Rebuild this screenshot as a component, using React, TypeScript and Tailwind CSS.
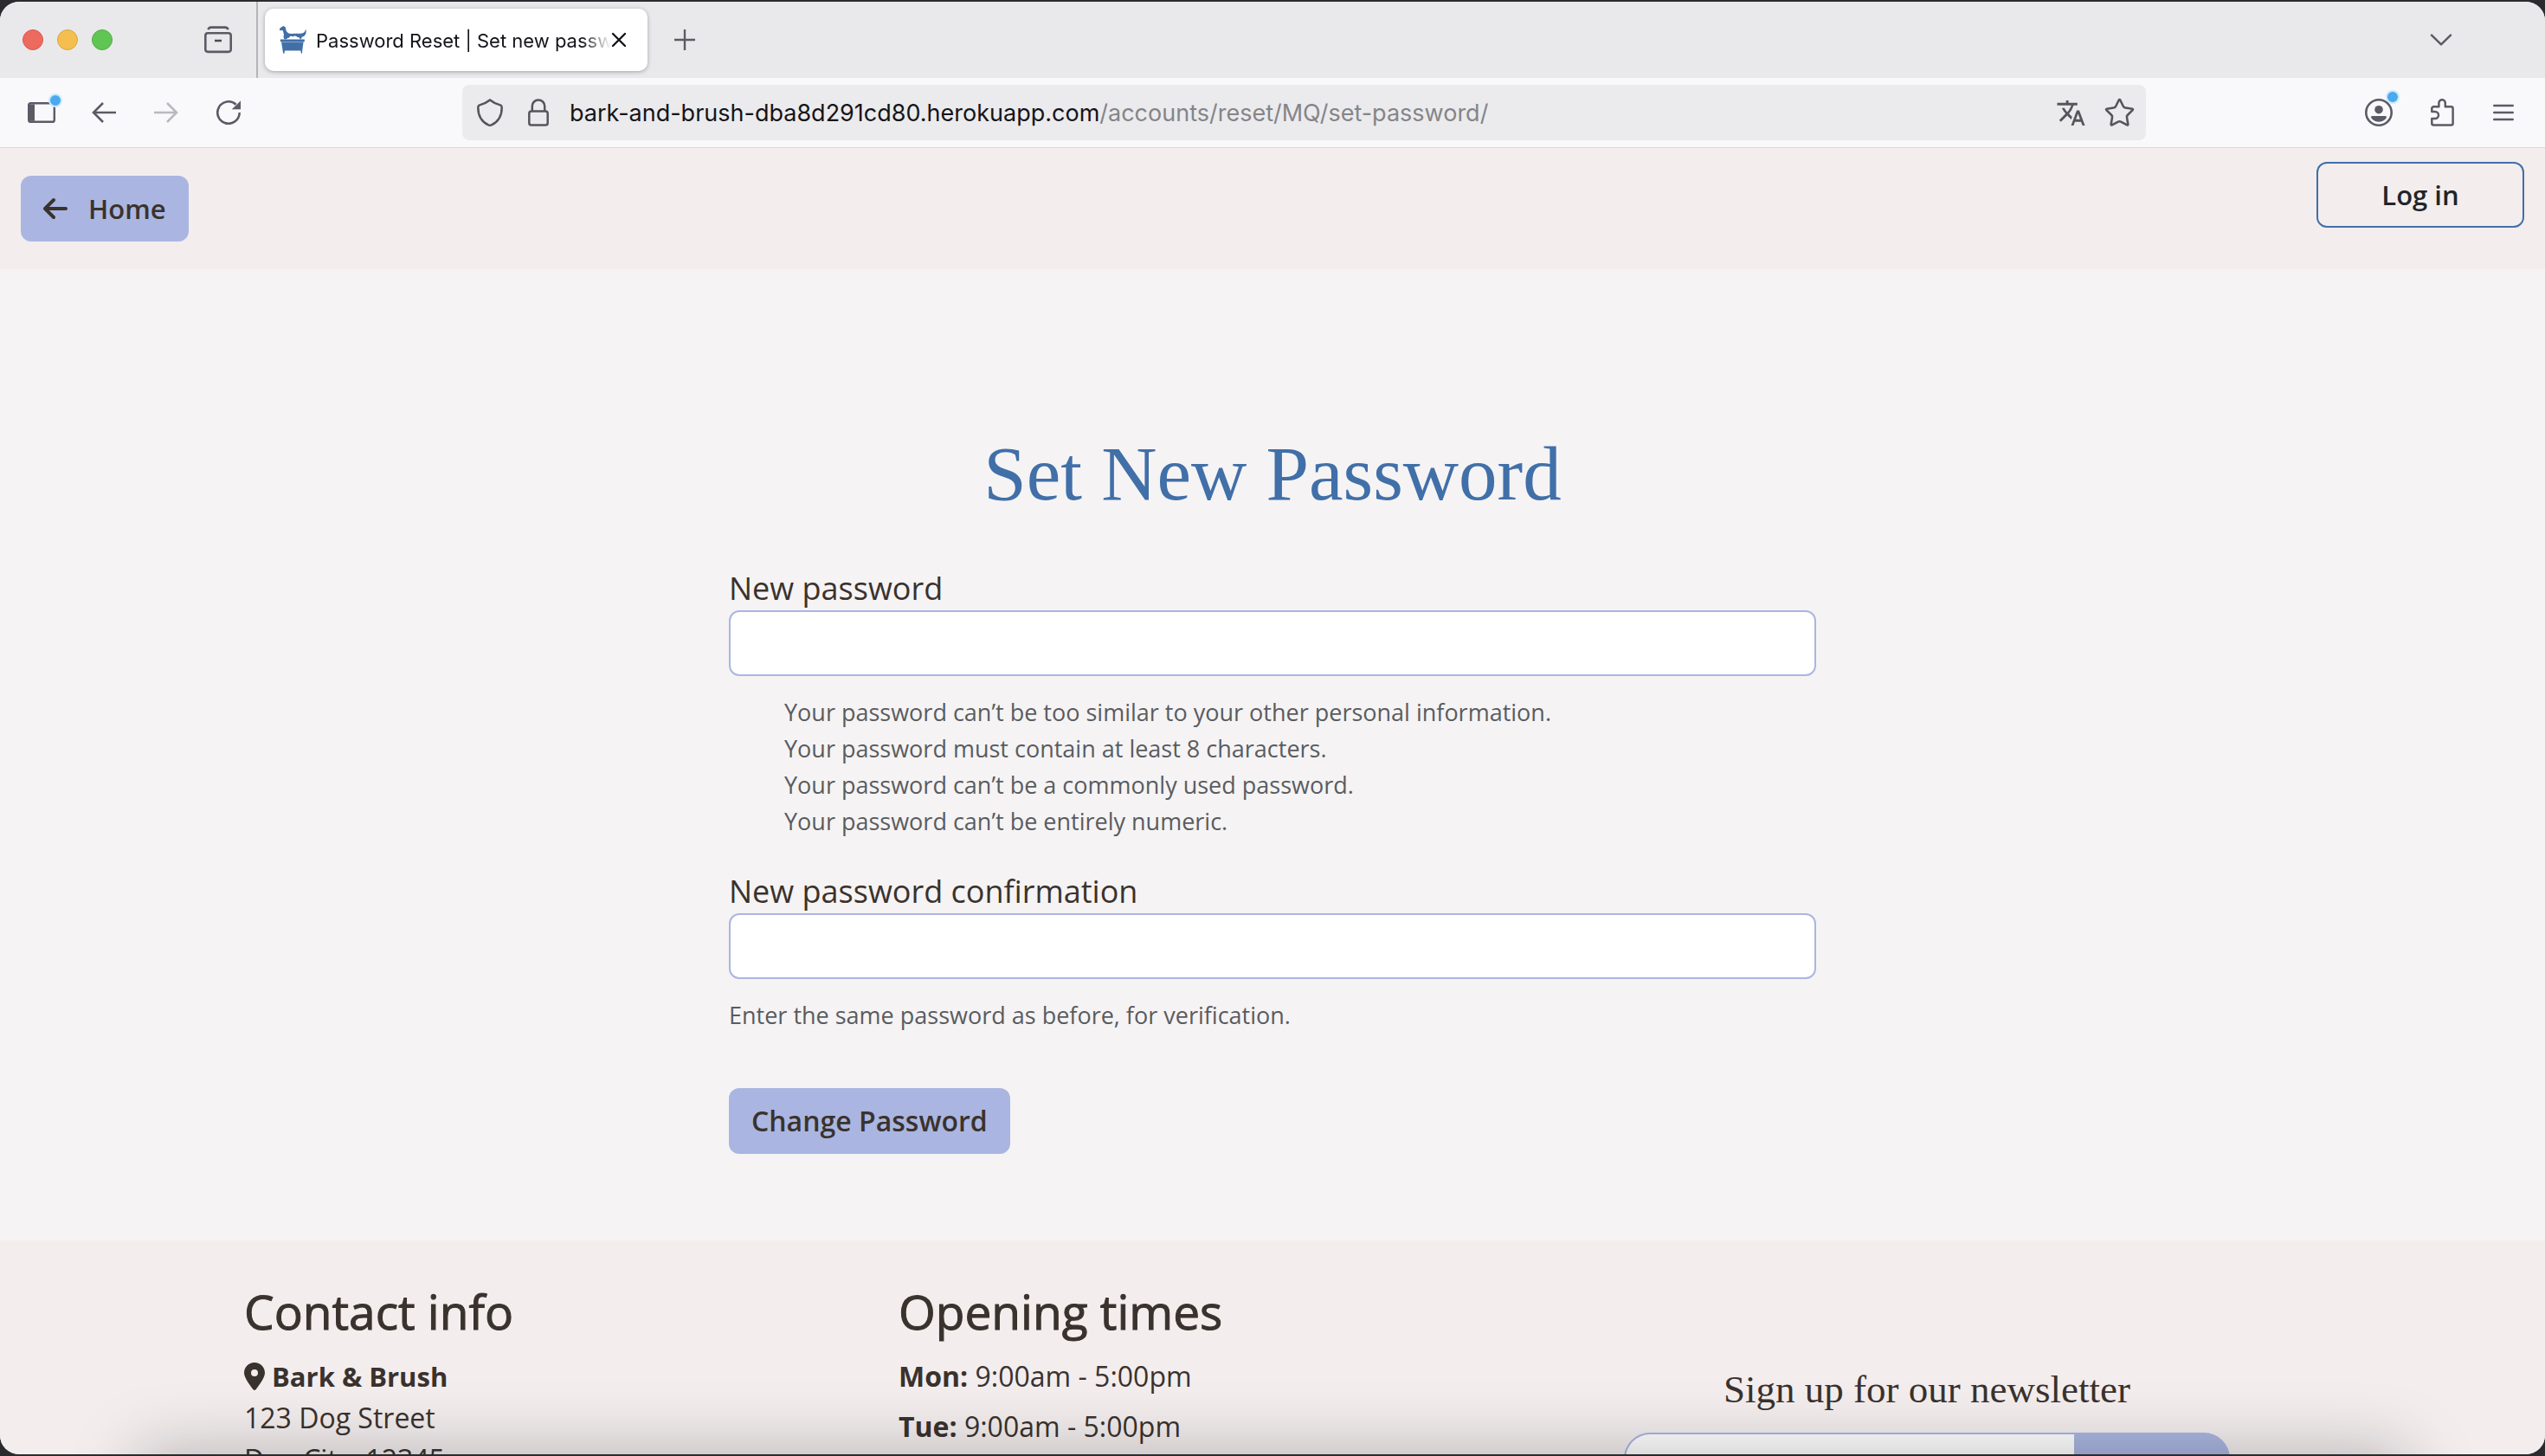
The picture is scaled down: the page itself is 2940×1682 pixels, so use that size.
import React from "react";
import { FaArrowLeft, FaLocationDot } from "react-icons/fa6";
import { MdTranslate } from "react-icons/md";
import { Star } from "lucide-react";

const passwordRules = [
  "Your password can’t be too similar to your other personal information.",
  "Your password must contain at least 8 characters.",
  "Your password can’t be a commonly used password.",
  "Your password can’t be entirely numeric.",
];

const openingTimes = [
  { day: "Mon", hours: "9:00am - 5:00pm" },
  { day: "Tue", hours: "9:00am - 5:00pm" },
];

function Favicon() {
  return (
    <svg width="32" height="32" viewBox="0 0 32 32" className="shrink-0" aria-hidden="true">
      <path
        d="M.8 3.6 3 1.2 5.6 0 7.8 1.6 8.6 5.4C10 8.4 13 9.4 17 8.8L24 8.8C28 8.8 30.4 7.4 31.2 3.4 32.6 8.4 30.6 11 28 12.4L29 15.2H4L6 10.4 4.8 5.2 1.2 5Z"
        fill="#416fa8"
      />
      <path d="M9 16C9 13.8 11 13.6 12 13.8 12.6 11.6 15.4 11.4 16.4 12.6 18 10.6 21 11.4 21.6 13.2 23.6 12.6 25 14.4 24.6 16ZM25.6 16 26.8 12.6 32 13V16ZM0 16V11H5.2L6.4 16Z" fill="#fff" />
      <path d="M1.8 15.6H29.8V18.2H28.6L27.2 28.6 27 31.8H26L25.2 28.6H7L6.4 31.8H5.2L4.6 28.6 3 18.2H1.8Z" fill="#416fa8" />
      <path d="M3.2 18.6H28.4" stroke="#a9bfdb" strokeWidth=".7" />
    </svg>
  );
}

function ArchiveIcon() {
  return (
    <svg width="32" height="32" viewBox="0 0 32 32" fill="none" stroke="#5b5b66" strokeWidth="2.6" aria-hidden="true">
      <path d="M4.6 4.2C5 2.4 6 1.6 7.6 1.6H24.4C26 1.6 27 2.4 27.4 4.2" />
      <rect x="1.3" y="8.3" width="29.4" height="21.6" rx="2.8" />
      <path d="M12 17H20" stroke="#4a4a54" />
    </svg>
  );
}

function SidebarIcon() {
  return (
    <svg width="32" height="24" viewBox="0 0 32 24" aria-hidden="true">
      <rect x="1.2" y="1.2" width="29.6" height="21.6" rx="2.4" fill="none" stroke="#5b5b66" strokeWidth="2.4" />
      <path d="M1.2 2.4H8V21.8H1.2Z" fill="#5b5b66" />
    </svg>
  );
}

function BackIcon() {
  return (
    <svg width="28" height="24" viewBox="0 0 28 24" fill="none" stroke="#5b5b66" strokeWidth="2.6" aria-hidden="true">
      <path d="M28 12H2M13 1 2 12 13 23" />
    </svg>
  );
}

function ForwardIcon() {
  return (
    <svg width="28" height="24" viewBox="0 0 28 24" fill="none" stroke="#b9b9bf" strokeWidth="2.6" aria-hidden="true">
      <path d="M0 12H26M15 1 26 12 15 23" />
    </svg>
  );
}

function ReloadIcon() {
  return (
    <svg width="28" height="28" viewBox="0 0 28 28" aria-hidden="true">
      <path d="M26.7 14A12.7 12.7 0 1 1 22.6 4.7" fill="none" stroke="#5b5b66" strokeWidth="2.6" />
      <path d="M28 .8V10H18.4Z" fill="#5b5b66" stroke="#5b5b66" strokeWidth=".6" strokeLinejoin="round" />
    </svg>
  );
}

function ShieldIcon() {
  return (
    <svg width="30" height="32" viewBox="0 0 30 32" fill="none" stroke="#55555c" strokeWidth="2.5" strokeLinejoin="round" aria-hidden="true">
      <path d="M15 1.4C12 3.8 7.4 6.2 3.2 7.4 1.6 7.9 1.3 8.8 1.3 10.4 1.3 19.6 5.6 26.6 13.2 30.4Q15 31.2 16.8 30.4C24.4 26.6 28.7 19.6 28.7 10.4 28.7 8.8 28.4 7.9 26.8 7.4 22.6 6.2 18 3.8 15 1.4Z" />
    </svg>
  );
}

function LockIcon() {
  return (
    <svg width="24" height="32" viewBox="0 0 24 32" fill="none" stroke="#55555c" strokeWidth="2.5" aria-hidden="true">
      <rect x="1.3" y="14.6" width="21.4" height="16" rx="2.6" />
      <path d="M4.8 14.6V8.6A7.2 7.2 0 0 1 19.2 8.6V14.6" />
    </svg>
  );
}

function AccountIcon() {
  return (
    <svg width="32" height="32" viewBox="0 0 32 32" fill="#5b5b66" aria-hidden="true">
      <circle cx="16" cy="16" r="14.7" fill="none" stroke="#5b5b66" strokeWidth="2.6" />
      <circle cx="16" cy="12.7" r="4.8" />
      <path d="M8.6 20H23.4C25.2 20 25.4 21.6 24.4 22.8 20.2 28.2 11.8 28.2 7.6 22.8 6.6 21.6 6.8 20 8.6 20Z" />
    </svg>
  );
}

function PuzzleIcon() {
  return (
    <svg width="27" height="32" viewBox="0 0 27 32" fill="none" stroke="#5b5b66" strokeWidth="2.5" strokeLinejoin="round" aria-hidden="true">
      <path d="M1.3 15V11.2A2 2 0 0 1 3.3 9.2H9.4V5A3.7 3.7 0 0 1 16.8 5V9.2H23.6A2 2 0 0 1 25.6 11.2V28.6A2 2 0 0 1 23.6 30.6H3.3A2 2 0 0 1 1.3 28.6V23H5A4 4 0 0 0 5 15Z" />
    </svg>
  );
}

function MenuIcon() {
  return (
    <svg width="24" height="20" viewBox="0 0 24 20" stroke="#5b5b66" strokeWidth="2.4" strokeLinecap="round" aria-hidden="true">
      <path d="M1.2 2H22.8M1.2 10H22.8M1.2 18H22.8" />
    </svg>
  );
}

function NotificationDot() {
  return <span className="absolute -right-2 -top-[10px] size-4 rounded-full border-2 border-[#c8ebfb] bg-[#4aa9ef]" />;
}

function TabBar() {
  return (
    <div className="flex h-[88px] items-center bg-[#e9e9eb]">
      <div className="ml-[26px] flex gap-4">
        <span className="size-6 rounded-full border border-[#d85a50] bg-[#ed6a5e]" />
        <span className="size-6 rounded-full border border-[#dba63c] bg-[#f5bf4f]" />
        <span className="size-6 rounded-full border border-[#4fae42] bg-[#61c554]" />
      </div>
      <button type="button" aria-label="Firefox View" className="ml-[106px]">
        <ArchiveIcon />
      </button>
      <div className="ml-7 h-full w-[2px] bg-[#b4b4b8]" />
      <div className="ml-2 flex h-[72px] w-[442px] items-center rounded-[10px] bg-white pl-4 pr-6 shadow-[0_1px_5px_rgba(0,0,0,0.3)]">
        <Favicon />
        <span className="ml-[11px] flex-1 overflow-hidden whitespace-nowrap pt-[2px] [mask-image:linear-gradient(to_right,black_90%,transparent)] text-[22px] leading-8 text-[#15141a]">
          Password Reset | Set new password
        </span>
        <button type="button" aria-label="Close tab" className="shrink-0">
          <svg width="18" height="18" viewBox="0 0 18 18" stroke="#15141a" strokeWidth="2.4" strokeLinecap="round" aria-hidden="true">
            <path d="M2 2 16 16M16 2 2 16" />
          </svg>
        </button>
      </div>
      <button type="button" aria-label="New tab" className="ml-[31px]">
        <svg width="24" height="24" viewBox="0 0 24 24" stroke="#5b5b66" strokeWidth="2.4" aria-hidden="true">
          <path d="M12 0V24M0 12H24" />
        </svg>
      </button>
      <button type="button" aria-label="List all tabs" className="ml-auto mr-[107px]">
        <svg width="26" height="14" viewBox="0 0 26 14" fill="none" stroke="#5b5b66" strokeWidth="2.5" strokeLinecap="round" strokeLinejoin="round" aria-hidden="true">
          <path d="M2 1.6 13 12.4 24 1.6" />
        </svg>
      </button>
    </div>
  );
}

function Toolbar() {
  return (
    <div className="flex h-[81px] items-center border-b border-[#d9d7da] bg-[#f9f9fb] px-8">
      <button type="button" aria-label="Sidebar" className="relative">
        <SidebarIcon />
        <NotificationDot />
      </button>
      <button type="button" aria-label="Back" className="ml-[42px]">
        <BackIcon />
      </button>
      <button type="button" aria-label="Forward" className="ml-11">
        <ForwardIcon />
      </button>
      <button type="button" aria-label="Reload" className="ml-11">
        <ReloadIcon />
      </button>
      <div className="ml-64 mr-[253px] flex h-16 flex-1 items-center rounded-lg bg-[#ebebed] pl-[17px] pr-3">
        <ShieldIcon />
        <span className="ml-[29px]">
          <LockIcon />
        </span>
        <span className="ml-6 flex-1 whitespace-nowrap pt-[2px] text-[27px] leading-10 text-[#15141a]">
          bark-and-brush-dba8d291cd80.herokuapp.com
          <span className="text-[#858588]">/accounts/reset/MQ/set-password/</span>
        </span>
        <button type="button" aria-label="Translate page">
          <MdTranslate className="size-[35px] text-[#55555c]" />
        </button>
        <button type="button" aria-label="Bookmark" className="ml-5">
          <Star className="size-[37px] text-[#55555c]" strokeWidth={1.7} />
        </button>
      </div>
      <button type="button" aria-label="Account" className="relative">
        <AccountIcon />
        <NotificationDot />
      </button>
      <button type="button" aria-label="Extensions" className="ml-11">
        <PuzzleIcon />
      </button>
      <button type="button" aria-label="Menu" className="ml-[45px] mr-1">
        <MenuIcon />
      </button>
    </div>
  );
}

function SiteHeader() {
  return (
    <header className="flex items-start justify-between bg-[#f3edee] px-6 pb-8 pt-4">
      <a href="#home" className="mt-4 flex h-[76px] items-center rounded-xl bg-[#aab6e1] px-[26px] text-[31px] font-semibold text-[#3a322d]">
        <FaArrowLeft className="mr-6 h-8 w-7" />
        Home
      </a>
      <a href="#login" className="flex h-[76px] w-60 items-center justify-center rounded-xl border-2 border-[#416fa8] text-[31px] font-semibold text-[#212529]">
        Log in
      </a>
    </header>
  );
}

function PasswordForm() {
  return (
    <main className="bg-[#f5f3f4] px-6 pb-[100px] pt-[183px]">
      <form className="mx-auto flex max-w-[1256px] flex-col" onSubmit={(e) => e.preventDefault()}>
        <h1 className="mb-[51px] text-center font-['Liberation_Serif',serif] text-[89px] leading-[106px] text-[#416fa8]">
          Set New Password
        </h1>
        <label htmlFor="password1" className="pt-1 text-4xl leading-[50px]">
          New password
        </label>
        <input id="password1" type="password" className="h-[76px] rounded-xl border-2 border-[#aab6e1] bg-white px-6 text-[31px] outline-none" />
        <ul className="mb-[31px] mt-[21px] pl-16 text-[27px] leading-[42px] text-[#595c5f]">
          {passwordRules.map((rule) => (
            <li key={rule}>{rule}</li>
          ))}
        </ul>
        <label htmlFor="password2" className="pt-1 text-4xl leading-[50px]">
          New password confirmation
        </label>
        <input id="password2" type="password" className="h-[76px] rounded-xl border-2 border-[#aab6e1] bg-white px-6 text-[31px] outline-none" />
        <p className="mb-[63px] mt-[21px] text-[27px] leading-[42px] text-[#595c5f]">
          Enter the same password as before, for verification.
        </p>
        <button type="submit" className="h-[76px] self-start rounded-xl bg-[#aab6e1] px-[26px] text-[32px] font-semibold">
          Change Password
        </button>
      </form>
    </main>
  );
}

function SiteFooter() {
  return (
    <footer className="bg-[#f3edee] px-6 pt-[49px]">
      <div className="mx-auto grid max-w-[2376px] grid-cols-[756fr_756fr_864fr] text-[32px] leading-[48px]">
        <section>
          <h2 className="mb-[18px] text-[55px] font-medium leading-[66px] [-webkit-text-stroke:1px_#3a322d]">Contact info</h2>
          <address className="not-italic">
            <p className="flex items-center gap-2 text-[31px] font-bold">
              <FaLocationDot className="h-8 w-6" />
              Bark &amp; Brush
            </p>
            <p>123 Dog Street</p>
            <p>Dog City, 12345</p>
          </address>
        </section>
        <section>
          <h2 className="mb-[18px] text-[55px] font-medium leading-[66px] [-webkit-text-stroke:1px_#3a322d]">Opening times</h2>
          <ul className="flex flex-col gap-[10px]">
            {openingTimes.map(({ day, hours }) => (
              <li key={day}>
                <strong>{day}:</strong> {hours}
              </li>
            ))}
          </ul>
        </section>
        <form className="pt-24 text-center" onSubmit={(e) => e.preventDefault()}>
          <label htmlFor="newsletter" className="mb-[23px] block font-['Liberation_Serif',serif] text-[45px] leading-[54px]">
            Sign up for our newsletter
          </label>
          <div className="mx-auto flex h-[76px] max-w-[700px]">
            <input id="newsletter" type="email" className="min-w-0 flex-1 rounded-l-[30px] border-2 border-r-0 border-[#aab6e1] bg-white px-6 outline-none" />
            <button type="submit" aria-label="Subscribe" className="w-[180px] rounded-r-[30px] bg-[#aab6e1]" />
          </div>
        </form>
      </div>
    </footer>
  );
}

export default function App() {
  return (
    <div className="h-screen overflow-hidden bg-[#2b2b2f] py-[2px] font-[Inter,sans-serif]">
      <div className="relative flex h-full flex-col overflow-hidden rounded-[22px] bg-[#f3edee]">
        <TabBar />
        <Toolbar />
        <div className="min-h-0 flex-1 overflow-hidden font-['Open_Sans',sans-serif] text-[#3a322d]">
          <SiteHeader />
          <PasswordForm />
          <SiteFooter />
        </div>
        <div className="pointer-events-none absolute inset-x-40 top-full h-32 shadow-[0_0_80px_rgba(0,0,0,0.27)]" />
      </div>
    </div>
  );
}
